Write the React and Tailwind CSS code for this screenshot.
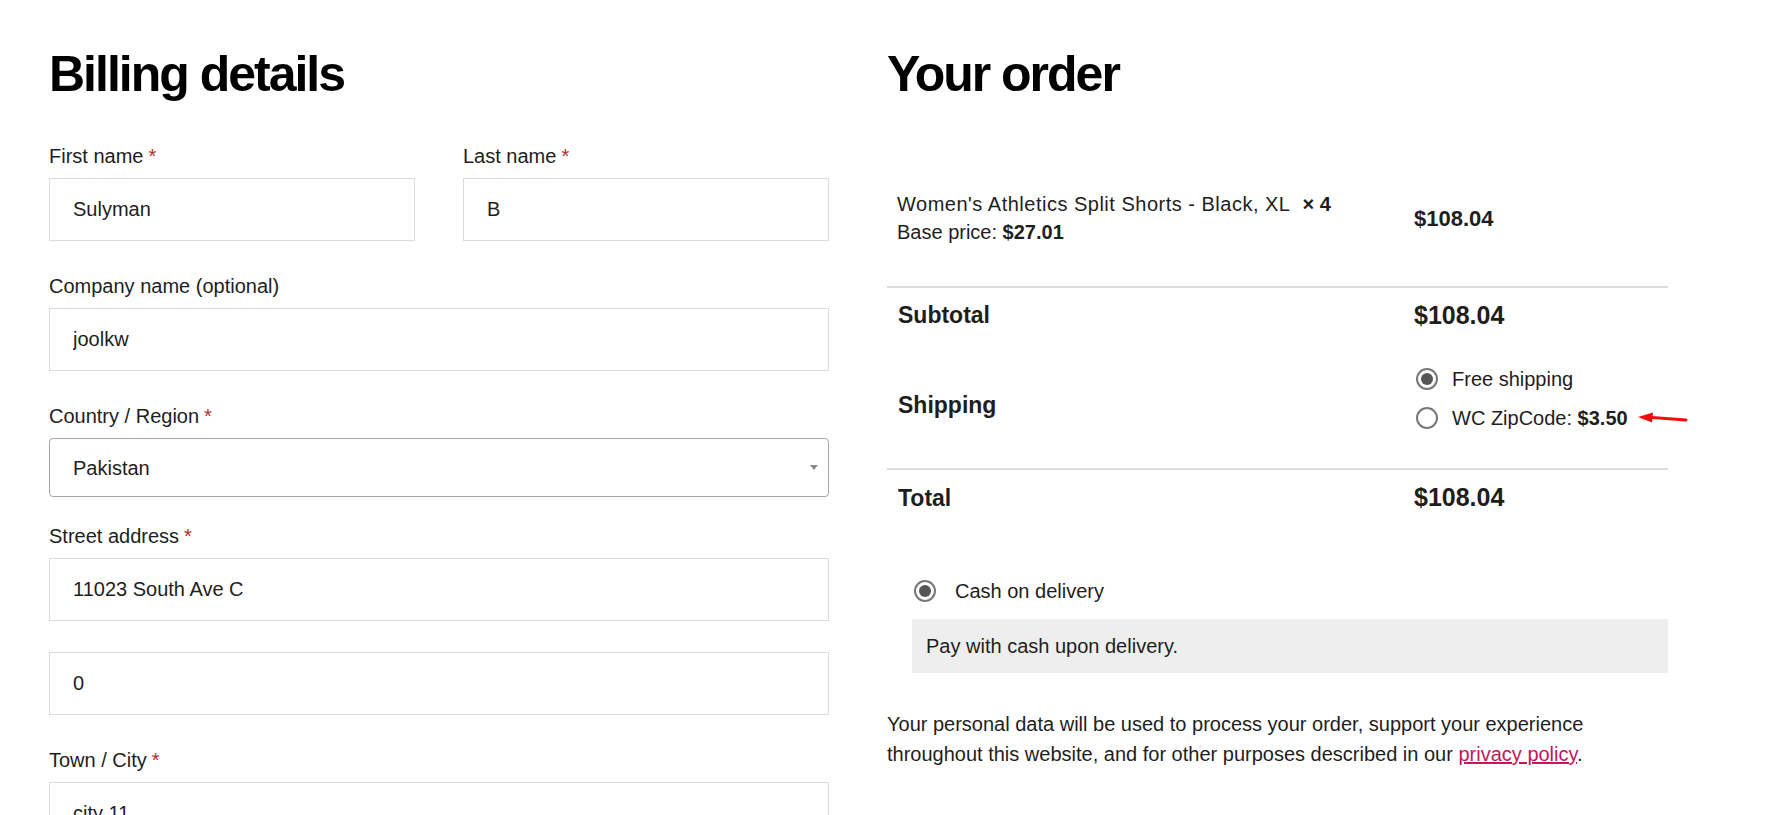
import React from "react";

function Req() {
  return <span className="ml-[5px] text-[#b32d2e]">*</span>;
}

function Field({ label, required, value, className = "mb-[30px]" }) {
  return (
    <div className={className}>
      <label className="mb-[7px] block h-[30px] leading-[30px]">
        {label}
        {required && <Req />}
      </label>
      <input
        readOnly
        defaultValue={value}
        className="block h-[63px] w-full border border-[#dcdcdc] bg-white px-[23px] text-[20px] text-[#1e1e1e] outline-none"
      />
    </div>
  );
}

function Radio({ checked }) {
  return (
    <span className="flex h-[22px] w-[22px] shrink-0 items-center justify-center rounded-full border-2 border-[#777] bg-white">
      {checked && <span className="h-[12px] w-[12px] rounded-full bg-[#555]" />}
    </span>
  );
}

function BillingDetails() {
  return (
    <div className="w-[780px] shrink-0">
      <h2 className="text-[50px] font-bold leading-[1.2] tracking-[-0.04em] text-black">Billing details</h2>
      <div className="mt-[37px] grid grid-cols-2 gap-x-[48px]">
        <Field label="First name" required value="Sulyman" />
        <Field label="Last name" required value="B" />
      </div>
      <Field label="Company name (optional)" value="joolkw" />
      <div className="mb-[24px]">
        <label className="mb-[7px] block h-[30px] leading-[30px]">
          Country / Region
          <Req />
        </label>
        <div className="flex h-[59px] items-center justify-between rounded-[4px] border border-[#a7a7a7] bg-white pl-[23px] pr-[10px]">
          <span>Pakistan</span>
          <span className="h-0 w-0 border-x-[4px] border-t-[5px] border-x-transparent border-t-[#888]" />
        </div>
      </div>
      <Field label="Street address" required value="11023 South Ave C" className="mb-[31px]" />
      <div className="mb-[30px]">
        <input
          readOnly
          defaultValue="0"
          className="block h-[63px] w-full border border-[#dcdcdc] bg-white px-[23px] text-[20px] text-[#1e1e1e] outline-none"
        />
      </div>
      <Field label="Town / City" required value="city 11" />
    </div>
  );
}

function OrderReview() {
  return (
    <div className="w-[781px] shrink-0">
      <h2 className="text-[50px] font-bold leading-[1.2] tracking-[-0.04em] text-black">Your order</h2>

      <div className="mt-[46px]">
        {/* product row */}
        <div className="flex h-[138px] items-center border-b-2 border-[#dcdcdc]">
          <div className="w-[517px] pl-[10px] leading-[28px]">
            <div>
              <span className="tracking-[0.5px]">Women's Athletics Split Shorts - Black, XL</span>
              <strong className="ml-3 font-bold">× 4</strong>
            </div>
            <div>
              Base price: <strong className="font-bold">$27.01</strong>
            </div>
          </div>
          <div className="pl-[10px] text-[22px] font-bold">$108.04</div>
        </div>

        {/* subtotal */}
        <div className="flex h-[55px] items-center">
          <div className="w-[517px] pl-[11px] text-[23px] font-bold">Subtotal</div>
          <div className="pl-[10px] text-[25px] font-bold">$108.04</div>
        </div>

        {/* shipping */}
        <div className="flex h-[127px] border-b-2 border-[#dcdcdc]">
          <div className="flex w-[517px] items-center pl-[11px] text-[23px] font-bold">Shipping</div>
          <div className="relative flex flex-col gap-[9px] pl-[12px] pt-[21px]">
            <div className="flex h-[30px] items-center gap-[14px]">
              <Radio checked />
              <span>Free shipping</span>
            </div>
            <div className="flex h-[30px] items-center gap-[14px]">
              <Radio />
              <span>
                WC ZipCode: <strong className="font-bold">$3.50</strong>
              </span>
            </div>
            {/* red annotation arrow */}
            <svg className="absolute left-[232px] top-[67px]" width="52" height="16" viewBox="0 0 52 16">
              <path d="M16 7.5 L50 10" stroke="#f20d0d" strokeWidth="3" strokeLinecap="round" fill="none" />
              <path d="M2 7 L17 2.5 L16 12.5 Z" fill="#f20d0d" />
            </svg>
          </div>
        </div>

        {/* total */}
        <div className="flex h-[56px] items-center">
          <div className="w-[517px] pl-[11px] text-[23px] font-bold">Total</div>
          <div className="pl-[10px] text-[25px] font-bold">$108.04</div>
        </div>
      </div>

      {/* payment */}
      <div className="mt-[50px] pl-[25px]">
        <div className="flex h-[30px] items-center gap-[19px] pl-[2px]">
          <Radio checked />
          <span>Cash on delivery</span>
        </div>
        <div className="mt-[13px] flex h-[54px] items-center bg-[#eeeeee] pl-[14px]">
          Pay with cash upon delivery.
        </div>
      </div>

      <p className="mt-[36px] leading-[30px]">
        Your personal data will be used to process your order, support your experience throughout this website, and for
        other purposes described in our{" "}
        <a href="#" className="text-[#c2185b] underline">
          privacy policy
        </a>
        .
      </p>
    </div>
  );
}

export default function App() {
  return (
    <div className="h-[815px] overflow-hidden bg-white font-['Liberation_Sans',Arial,sans-serif] text-[20px] text-[#1e1e1e]">
      <div className="flex gap-[58px] pl-[49px] pt-[44px]">
        <BillingDetails />
        <OrderReview />
      </div>
    </div>
  );
}
